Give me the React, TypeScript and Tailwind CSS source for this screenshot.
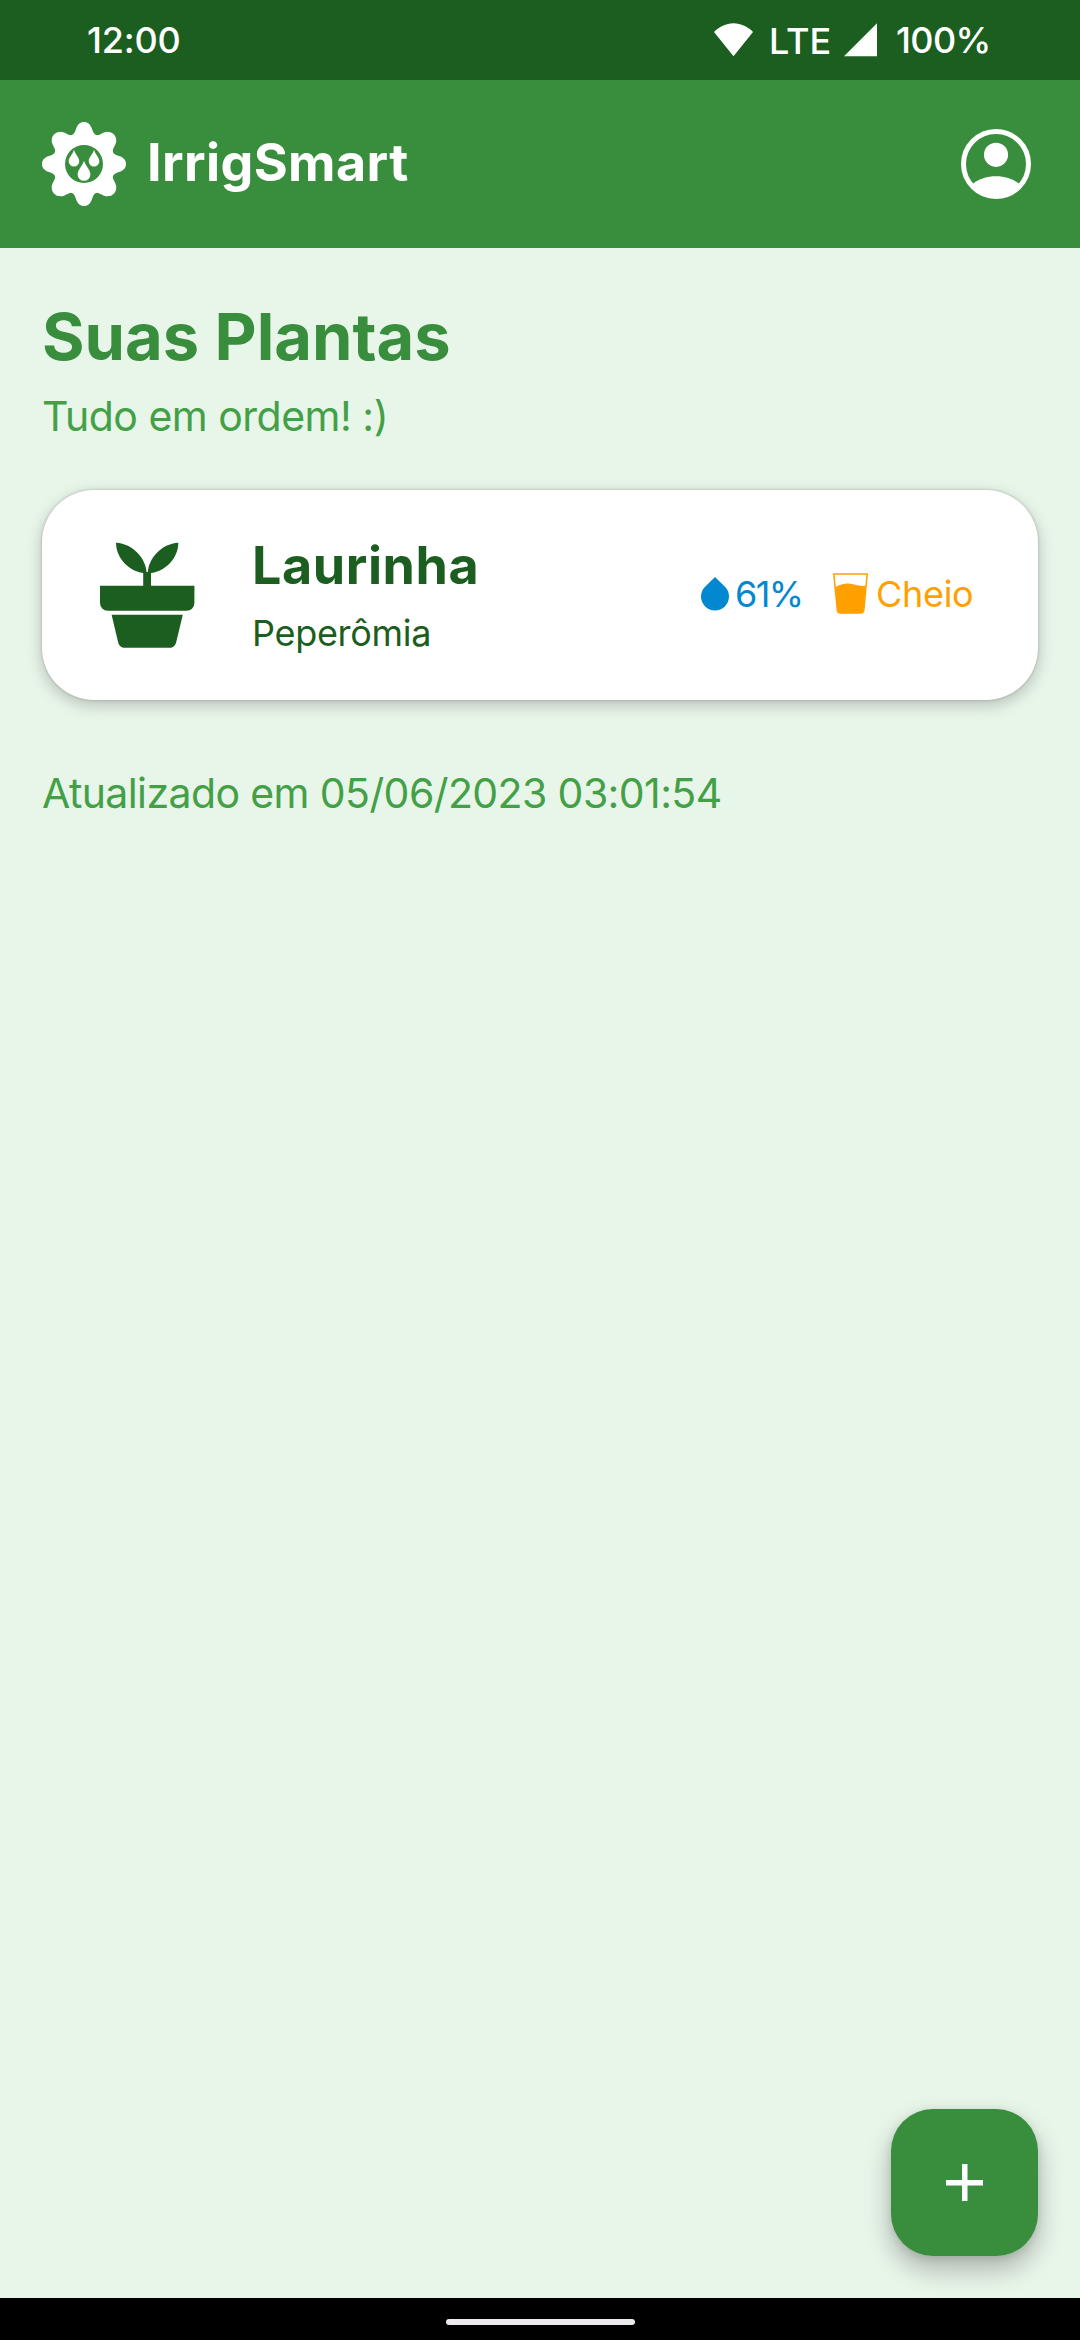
const LOBES =
  "M0 0V-42C4 -42 6.5 -39.5 8 -35C9.5 -30.5 11 -28.5 13.8 -28.9C16.5 -29.3 19.5 -32.3 23.5 -32.3C28.5 -32.3 32.3 -28.5 32.3 -23.5C32.3 -19.5 29.3 -16.5 28.9 -13.8C28.5 -11 30.5 -9.5 35 -8C39.5 -6.5 42 -4 42 0Z";

function Logo() {
  return (
    <svg className="h-[84px] w-[84px] shrink-0" viewBox="-42 -42 84 84">
      <g fill="#fff">
        <path d={LOBES} />
        <path d={LOBES} transform="rotate(90)" />
        <path d={LOBES} transform="rotate(180)" />
        <path d={LOBES} transform="rotate(270)" />
      </g>
      <circle r="19" fill="#388E3C" />
      <g fill="#fff">
        <path d="M-10 -14C-8.5 -9.5 -4.7 -6.5 -4.7 -2.8A5.3 5.3 0 0 1 -15.3 -2.8C-15.3 -6.5 -11.5 -9.5 -10 -14Z" />
        <path d="M10 -14C11.5 -9.5 15.3 -6.5 15.3 -2.8A5.3 5.3 0 0 1 4.7 -2.8C4.7 -6.5 8.5 -9.5 10 -14Z" />
        <path d="M0 -3.3C1.8 2 6.4 6 6.4 10.4A6.4 6.4 0 0 1 -6.4 10.4C-6.4 6 -1.8 2 0 -3.3Z" />
      </g>
    </svg>
  );
}

function Profile() {
  return (
    <svg className="h-[70px] w-[70px]" viewBox="0 0 70 70" fill="#fff">
      <circle cx="35" cy="35" r="32.5" fill="none" stroke="#fff" strokeWidth="5" />
      <circle cx="35" cy="25.8" r="12.1" />
      <path d="M12.2 54.5C18 50 26 47.3 35 47.3S52 50 57.8 54.5L58 60A34 34 0 0 1 12 60Z" />
    </svg>
  );
}

function PottedPlant() {
  return (
    <svg className="h-[106px] w-[95px] shrink-0" viewBox="0 0 95 106" fill="#1B5E20">
      <path d="M16 .7C33 1.5 46.5 17 46.5 31.3C29 30.5 16 16 16 .7Z" />
      <path d="M78.3 .7C61.3 1.5 47.8 17 47.8 31.3C65.3 30.5 78.3 16 78.3 .7Z" />
      <path d="M43.2 30H51V45H43.2Z" />
      <path d="M0 43.8H94.4V61A7.7 7.7 0 0 1 86.7 68.7H7.7A7.7 7.7 0 0 1 0 61Z" />
      <path d="M11.6 72.7H82.8L76.3 99.8C75.3 104 73 105.8 69.5 105.8H25C21.4 105.8 19 104 18 99.8Z" />
    </svg>
  );
}

function Drop() {
  return (
    <svg className="h-[34px] w-7 shrink-0" viewBox="0 0 28 34" fill="#0288D1">
      <path d="M14 0L24 9.7A14 14 0 1 1 4 9.7Z" />
    </svg>
  );
}

function Glass() {
  return (
    <svg className="h-[41px] w-[35px] shrink-0" viewBox="0 0 35 41">
      <path d="M.8 .9H34.2L30.8 37.2C30.5 39.3 29.6 40 27.7 40H7.3C5.4 40 4.5 39.3 4.3 37.2Z" fill="#fff" stroke="#FFA000" strokeWidth="1.5" />
      <path d="M2.2 14.2C9 10.5 14.5 9.6 21 11.6C25 12.9 28.5 13 32.8 12.8L30.4 39L27.7 40H7.3L4.6 38Z" fill="#FFA000" />
    </svg>
  );
}

export default function App() {
  return (
    <div className="flex h-[2340px] w-[1080px] flex-col overflow-hidden bg-[#E8F5E9] font-['Inter',sans-serif]">
      <div className="flex h-20 shrink-0 items-center bg-[#1B5E20] text-[36px] leading-[48px] font-medium whitespace-nowrap text-white">
        <span className="w-[714px] pl-[87px] tracking-[-0.2px]">12:00</span>
        <svg className="h-[34px] w-[39px] shrink-0" viewBox="0 0 39 34" fill="#fff">
          <path d="M19.5 33.2L0 9C5 3.8 12 .3 19.5 .3S34 3.8 39 9Z" />
        </svg>
        <span className="mt-0.5 ml-4 w-[75px]">LTE</span>
        <svg className="h-[34px] w-[33px] shrink-0" viewBox="0 0 33 34" fill="#fff">
          <path d="M33 .3V33.3H0Z" />
        </svg>
        <span className="ml-[19px] tracking-[-0.6px]">100%</span>
      </div>

      <header className="flex h-[168px] shrink-0 items-center bg-[#388E3C] pr-[49px] pl-[42px]">
        <Logo />
        <span className="ml-[21px] pb-0.5 text-[52px] leading-[64px] font-bold tracking-[0.4px] text-white">IrrigSmart</span>
        <button className="ml-auto" aria-label="Perfil">
          <Profile />
        </button>
      </header>

      <main className="flex grow flex-col px-[42px] pt-[49px]">
        <h1 className="text-[65px] leading-[80px] font-bold text-[#388E3C]">Suas Plantas</h1>
        <p className="mt-[11px] text-[41px] leading-[56px] tracking-[-0.5px] text-[#43A047]">Tudo em ordem! :)</p>

        <section className="mt-[46px] flex h-[210px] items-center rounded-[52px] bg-white pl-[58px] shadow-[0_5px_16px_rgba(0,0,0,0.22),0_0_3px_rgba(0,0,0,0.22)]">
          <PottedPlant />
          <div className="ml-[57px] flex flex-col gap-[11px] text-[#1B5E20]">
            <h2 className="text-[52px] leading-[64px] font-bold tracking-[0.6px]">Laurinha</h2>
            <p className="text-[36px] leading-[48px] tracking-[-0.3px]">Peperômia</p>
          </div>
          <div className="ml-auto flex items-center pb-[3px] text-[36px] leading-[48px]">
            <Drop />
            <span className="ml-1.5 w-[98px] tracking-[-1.6px] text-[#0288D1]">61%</span>
            <Glass />
            <span className="ml-2 w-[162px] tracking-[-0.3px] text-[#FFA000]">Cheio</span>
          </div>
        </section>

        <p className="mt-[65px] text-[41px] leading-[56px] tracking-[-0.6px] text-[#43A047]">Atualizado em 05/06/2023 03:01:54</p>

        <button
          className="mt-auto mb-[42px] flex size-[147px] items-center justify-center self-end rounded-[42px] bg-[#388E3C] shadow-[0_13px_26px_rgba(0,0,0,0.27),0_2px_8px_rgba(0,0,0,0.1)]"
          aria-label="Adicionar planta"
        >
          <svg className="size-[37px]" viewBox="0 0 37 37" fill="#fff">
            <path d="M16 0H21.5V16H37V21.5H21.5V37H16V21.5H0V16H16Z" />
          </svg>
        </button>
      </main>

      <div className="z-10 flex h-[42px] shrink-0 items-center justify-center bg-black pb-px">
        <div className="mt-1.5 h-1.5 w-[189px] rounded-full bg-[#ECE9EC]" />
      </div>
    </div>
  );
}
